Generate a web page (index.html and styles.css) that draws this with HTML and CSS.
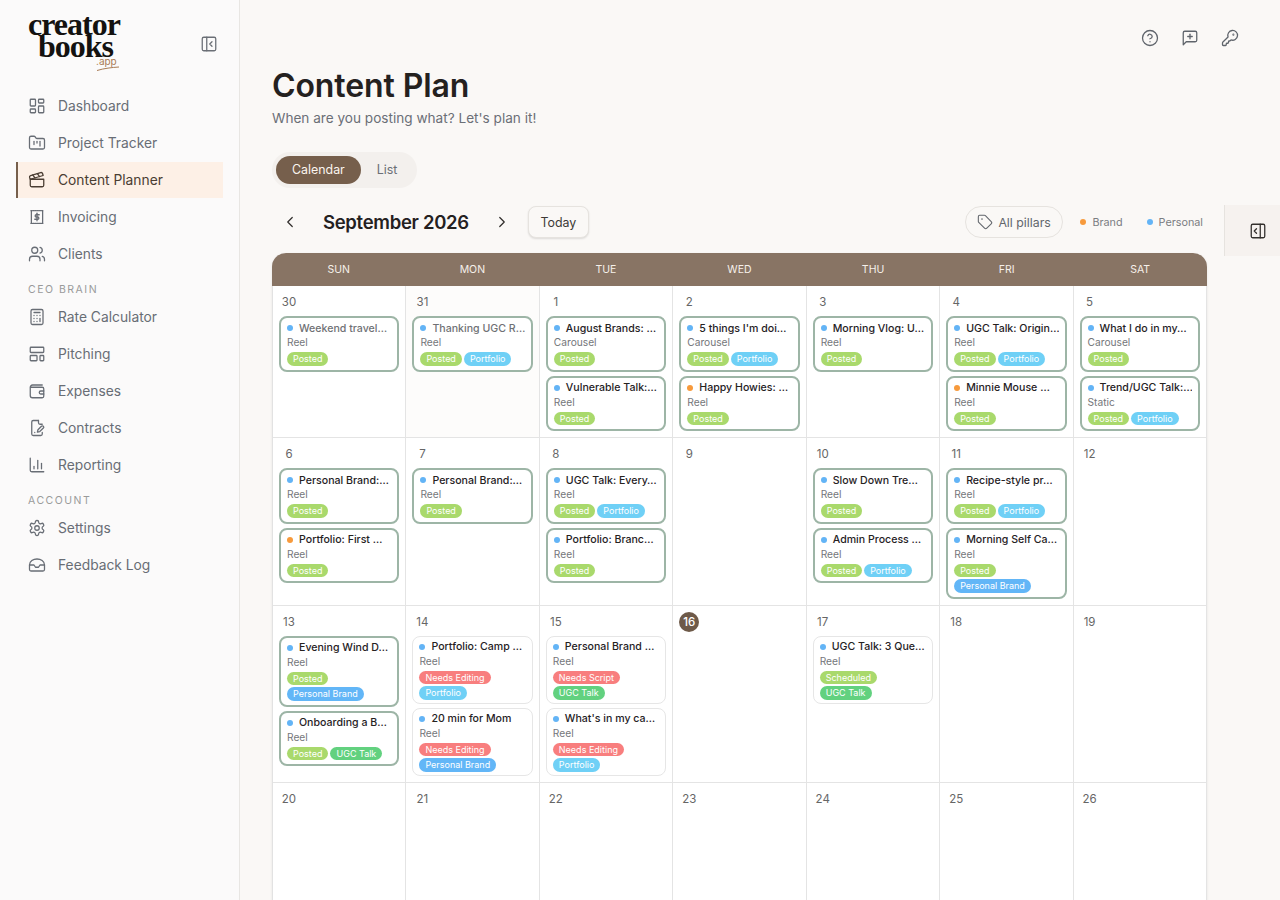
FILE: index.html
```html
<!DOCTYPE html>
<html lang="en">
<head>
  <meta charset="UTF-8">
  <title>Content Plan</title>
  <link rel="stylesheet" href="styles.css">
</head>
<body>
  <svg class="sprite" width="0" height="0">
    <symbol id="i-dashboard" viewBox="0 0 24 24"><rect x="3" y="3" width="7" height="9" rx="1"/><rect x="14" y="3" width="7" height="5" rx="1"/><rect x="14" y="12" width="7" height="9" rx="1"/><rect x="3" y="16" width="7" height="5" rx="1"/></symbol>
    <symbol id="i-folder" viewBox="0 0 24 24"><path d="M4 20h16a2 2 0 0 0 2-2V8a2 2 0 0 0-2-2h-7.93a2 2 0 0 1-1.66-.9l-.82-1.2A2 2 0 0 0 7.93 3H4a2 2 0 0 0-2 2v13c0 1.1.9 2 2 2Z"/><path d="M8 10v4"/><path d="M12 10v2"/><path d="M16 10v6"/></symbol>
    <symbol id="i-clapper" viewBox="0 0 24 24"><path d="M20.2 6 3 11l-.9-2.4c-.3-1.1.3-2.2 1.3-2.5l13.5-4c1.1-.3 2.2.3 2.5 1.3Z"/><path d="m6.2 5.3 3.1 3.9"/><path d="m12.4 3.4 3.1 4"/><path d="M3 11h18v8a2 2 0 0 1-2 2H5a2 2 0 0 1-2-2Z"/></symbol>
    <symbol id="i-invoice" viewBox="0 0 24 24"><path d="M4.5 3.5v17"/><path d="M19.5 3.5v17"/><path d="M4 3.5h16" stroke-dasharray="1.6 1.2"/><path d="M4 20.5h16" stroke-dasharray="1.6 1.2"/><path d="M12 7v10"/><path d="M15 9h-4a1.5 1.5 0 0 0 0 3h2a1.5 1.5 0 0 1 0 3H9"/></symbol>
    <symbol id="i-users" viewBox="0 0 24 24"><path d="M16 21v-2a4 4 0 0 0-4-4H6a4 4 0 0 0-4 4v2"/><circle cx="9" cy="7" r="4"/><path d="M22 21v-2a4 4 0 0 0-3-3.87"/><path d="M16 3.13a4 4 0 0 1 0 7.75"/></symbol>
    <symbol id="i-calc" viewBox="0 0 24 24"><rect x="4" y="2" width="16" height="20" rx="2"/><path d="M8 6h8"/><path d="M16 14v4"/><path d="M16 10h.01"/><path d="M12 10h.01"/><path d="M8 10h.01"/><path d="M12 14h.01"/><path d="M8 14h.01"/><path d="M12 18h.01"/><path d="M8 18h.01"/></symbol>
    <symbol id="i-template" viewBox="0 0 24 24"><rect x="3" y="3" width="18" height="7" rx="1"/><rect x="3" y="14" width="9" height="7" rx="1"/><rect x="16" y="14" width="5" height="7" rx="1"/></symbol>
    <symbol id="i-wallet" viewBox="0 0 24 24"><path d="M19 4H6a3 3 0 0 0-3 3v11a3 3 0 0 0 3 3h13a2 2 0 0 0 2-2V9a2 2 0 0 0-2-2H3"/><path d="M21 12h-4a2 2 0 0 0 0 4h4"/></symbol>
    <symbol id="i-contract" viewBox="0 0 24 24"><path d="M14 2H7a2 2 0 0 0-2 2v16a2 2 0 0 0 2 2h10a2 2 0 0 0 2-2v-2"/><path d="M14 2v3a2 2 0 0 0 2 2h3"/><path d="M20.5 9.6a1.8 1.8 0 0 0-2.6 0l-4.6 4.7-.8 3.2 3.2-.8 4.8-4.6a1.8 1.8 0 0 0 0-2.5z"/><path d="M9 18h.01"/></symbol>
    <symbol id="i-chart" viewBox="0 0 24 24"><path d="M3 3v16a2 2 0 0 0 2 2h16"/><path d="M8 17v-3"/><path d="M13 17V6"/><path d="M18 17V10"/></symbol>
    <symbol id="i-gear" viewBox="0 0 24 24"><path d="M12.22 2h-.44a2 2 0 0 0-2 2v.18a2 2 0 0 1-1 1.73l-.43.25a2 2 0 0 1-2 0l-.15-.08a2 2 0 0 0-2.73.73l-.22.38a2 2 0 0 0 .73 2.73l.15.1a2 2 0 0 1 1 1.72v.51a2 2 0 0 1-1 1.74l-.15.09a2 2 0 0 0-.73 2.73l.22.38a2 2 0 0 0 2.73.73l.15-.08a2 2 0 0 1 2 0l.43.25a2 2 0 0 1 1 1.73V20a2 2 0 0 0 2 2h.44a2 2 0 0 0 2-2v-.18a2 2 0 0 1 1-1.73l.43-.25a2 2 0 0 1 2 0l.15.08a2 2 0 0 0 2.73-.73l.22-.39a2 2 0 0 0-.73-2.73l-.15-.08a2 2 0 0 1-1-1.74v-.5a2 2 0 0 1 1-1.74l.15-.09a2 2 0 0 0 .73-2.73l-.22-.38a2 2 0 0 0-2.73-.73l-.15.08a2 2 0 0 1-2 0l-.43-.25a2 2 0 0 1-1-1.73V4a2 2 0 0 0-2-2z"/><circle cx="12" cy="12" r="3"/></symbol>
    <symbol id="i-inbox" viewBox="0 0 24 24"><path d="M2 12h6l2 3h4l2-3h6"/><path d="M2 12c0-5 5-8 10-8s10 3 10 8v6a2 2 0 0 1-2 2H4a2 2 0 0 1-2-2z"/></symbol>
    <symbol id="i-help" viewBox="0 0 24 24"><circle cx="12" cy="12" r="10"/><path d="M9.09 9a3 3 0 0 1 5.83 1c0 2-3 3-3 3"/><path d="M12 17h.01"/></symbol>
    <symbol id="i-msg" viewBox="0 0 24 24"><path d="M21 15a2 2 0 0 1-2 2H7l-4 4V5a2 2 0 0 1 2-2h14a2 2 0 0 1 2 2z"/><path d="M12 7v6"/><path d="M9 10h6"/></symbol>
    <symbol id="i-key" viewBox="0 0 24 24"><path d="M2.586 17.414A2 2 0 0 0 2 18.828V21a1 1 0 0 0 1 1h3a1 1 0 0 0 1-1v-1a1 1 0 0 1 1-1h1a1 1 0 0 0 1-1v-1a1 1 0 0 1 1-1h.172a2 2 0 0 0 1.414-.586l.814-.814a6.5 6.5 0 1 0-4-4z"/><circle cx="16.5" cy="7.5" r=".5"/></symbol>
    <symbol id="i-panel-left" viewBox="0 0 24 24"><rect x="3" y="3" width="18" height="18" rx="2"/><path d="M9 3v18"/><path d="m16 15-3-3 3-3"/></symbol>
    <symbol id="i-panel-right" viewBox="0 0 24 24"><rect x="3" y="3" width="18" height="18" rx="2"/><path d="M15 3v18"/><path d="m10 15-3-3 3-3"/></symbol>
    <symbol id="i-tag" viewBox="0 0 24 24"><path d="M12.586 2.586A2 2 0 0 0 11.172 2H4a2 2 0 0 0-2 2v7.172a2 2 0 0 0 .586 1.414l8.704 8.704a2.426 2.426 0 0 0 3.42 0l6.58-6.58a2.426 2.426 0 0 0 0-3.42z"/><circle cx="7.5" cy="7.5" r=".5"/></symbol>
    <symbol id="i-prev" viewBox="0 0 24 24"><path d="m15 18-6-6 6-6"/></symbol>
    <symbol id="i-next" viewBox="0 0 24 24"><path d="m9 18 6-6-6-6"/></symbol>
  </svg>

  <div class="app">
    <!-- Sidebar -->
    <aside class="sidebar">
      <div class="brand">
        <div class="logo">
          <div class="logo-line">creator</div>
          <div class="logo-line logo-line2">books</div>
          <div class="logo-app">.app</div>
          <svg class="logo-swoosh" viewBox="0 0 24 5"><path d="M1 4.5C8 2.4 16 1.4 23 1"/></svg>
        </div>
        <svg class="icon collapse-btn"><use href="#i-panel-left"/></svg>
      </div>

      <nav class="nav">
        <a class="nav-item"><svg class="icon"><use href="#i-dashboard"/></svg>Dashboard</a>
        <a class="nav-item"><svg class="icon"><use href="#i-folder"/></svg>Project Tracker</a>
        <a class="nav-item active"><svg class="icon"><use href="#i-clapper"/></svg>Content Planner</a>
        <a class="nav-item"><svg class="icon"><use href="#i-invoice"/></svg>Invoicing</a>
        <a class="nav-item"><svg class="icon"><use href="#i-users"/></svg>Clients</a>
        <div class="nav-label">CEO BRAIN</div>
        <a class="nav-item"><svg class="icon"><use href="#i-calc"/></svg>Rate Calculator</a>
        <a class="nav-item"><svg class="icon"><use href="#i-template"/></svg>Pitching</a>
        <a class="nav-item"><svg class="icon"><use href="#i-wallet"/></svg>Expenses</a>
        <a class="nav-item"><svg class="icon"><use href="#i-contract"/></svg>Contracts</a>
        <a class="nav-item"><svg class="icon"><use href="#i-chart"/></svg>Reporting</a>
        <div class="nav-label">ACCOUNT</div>
        <a class="nav-item"><svg class="icon"><use href="#i-gear"/></svg>Settings</a>
        <a class="nav-item"><svg class="icon"><use href="#i-inbox"/></svg>Feedback Log</a>
      </nav>
    </aside>

    <!-- Main -->
    <main class="main">
      <div class="topbar">
        <svg class="icon"><use href="#i-help"/></svg>
        <svg class="icon"><use href="#i-msg"/></svg>
        <svg class="icon"><use href="#i-key"/></svg>
      </div>

      <h1 class="page-title">Content Plan</h1>
      <p class="page-sub">When are you posting what? Let's plan it!</p>

      <div class="toggle">
        <span class="toggle-btn on">Calendar</span>
        <span class="toggle-btn">List</span>
      </div>

      <div class="month-bar">
        <svg class="icon month-prev"><use href="#i-prev"/></svg>
        <h2 class="month-name">September 2026</h2>
        <svg class="icon month-next"><use href="#i-next"/></svg>
        <button class="today-btn">Today</button>
        <div class="legend">
          <span class="pillars"><svg class="icon"><use href="#i-tag"/></svg>All pillars</span>
          <span class="legend-item"><i class="dot orange"></i>Brand</span>
          <span class="legend-item"><i class="dot blue"></i>Personal</span>
        </div>
      </div>

      <div class="calendar">
        <div class="cal-head">
          <div>SUN</div><div>MON</div><div>TUE</div><div>WED</div><div>THU</div><div>FRI</div><div>SAT</div>
        </div>
        <div class="cal-grid">
          <!-- week 1 -->
          <div class="day other">
            <div class="day-num">30</div>
            <div class="card done"><div class="card-title muted"><i class="dot blue"></i><span>Weekend travel…</span></div><div class="card-type">Reel</div><div class="tags"><span class="tag green">Posted</span></div></div>
          </div>
          <div class="day other tint">
            <div class="day-num">31</div>
            <div class="card done"><div class="card-title muted"><i class="dot blue"></i><span>Thanking UGC R…</span></div><div class="card-type">Reel</div><div class="tags"><span class="tag green">Posted</span><span class="tag sky">Portfolio</span></div></div>
          </div>
          <div class="day">
            <div class="day-num">1</div>
            <div class="card done"><div class="card-title"><i class="dot blue"></i><span>August Brands: …</span></div><div class="card-type">Carousel</div><div class="tags"><span class="tag green">Posted</span></div></div>
            <div class="card done"><div class="card-title"><i class="dot blue"></i><span>Vulnerable Talk:…</span></div><div class="card-type">Reel</div><div class="tags"><span class="tag green">Posted</span></div></div>
          </div>
          <div class="day">
            <div class="day-num">2</div>
            <div class="card done"><div class="card-title"><i class="dot blue"></i><span>5 things I'm doi…</span></div><div class="card-type">Carousel</div><div class="tags"><span class="tag green">Posted</span><span class="tag sky">Portfolio</span></div></div>
            <div class="card done"><div class="card-title"><i class="dot orange"></i><span>Happy Howies: …</span></div><div class="card-type">Reel</div><div class="tags"><span class="tag green">Posted</span></div></div>
          </div>
          <div class="day">
            <div class="day-num">3</div>
            <div class="card done"><div class="card-title"><i class="dot blue"></i><span>Morning Vlog: U…</span></div><div class="card-type">Reel</div><div class="tags"><span class="tag green">Posted</span></div></div>
          </div>
          <div class="day">
            <div class="day-num">4</div>
            <div class="card done"><div class="card-title"><i class="dot blue"></i><span>UGC Talk: Origin…</span></div><div class="card-type">Reel</div><div class="tags"><span class="tag green">Posted</span><span class="tag sky">Portfolio</span></div></div>
            <div class="card done"><div class="card-title"><i class="dot orange"></i><span>Minnie Mouse …</span></div><div class="card-type">Reel</div><div class="tags"><span class="tag green">Posted</span></div></div>
          </div>
          <div class="day">
            <div class="day-num">5</div>
            <div class="card done"><div class="card-title"><i class="dot blue"></i><span>What I do in my…</span></div><div class="card-type">Carousel</div><div class="tags"><span class="tag green">Posted</span></div></div>
            <div class="card done"><div class="card-title"><i class="dot blue"></i><span>Trend/UGC Talk:…</span></div><div class="card-type">Static</div><div class="tags"><span class="tag green">Posted</span><span class="tag sky">Portfolio</span></div></div>
          </div>

          <!-- week 2 -->
          <div class="day">
            <div class="day-num">6</div>
            <div class="card done"><div class="card-title"><i class="dot blue"></i><span>Personal Brand:…</span></div><div class="card-type">Reel</div><div class="tags"><span class="tag green">Posted</span></div></div>
            <div class="card done"><div class="card-title"><i class="dot orange"></i><span>Portfolio: First …</span></div><div class="card-type">Reel</div><div class="tags"><span class="tag green">Posted</span></div></div>
          </div>
          <div class="day">
            <div class="day-num">7</div>
            <div class="card done"><div class="card-title"><i class="dot blue"></i><span>Personal Brand:…</span></div><div class="card-type">Reel</div><div class="tags"><span class="tag green">Posted</span></div></div>
          </div>
          <div class="day">
            <div class="day-num">8</div>
            <div class="card done"><div class="card-title"><i class="dot blue"></i><span>UGC Talk: Every…</span></div><div class="card-type">Reel</div><div class="tags"><span class="tag green">Posted</span><span class="tag sky">Portfolio</span></div></div>
            <div class="card done"><div class="card-title"><i class="dot blue"></i><span>Portfolio: Branc…</span></div><div class="card-type">Reel</div><div class="tags"><span class="tag green">Posted</span></div></div>
          </div>
          <div class="day">
            <div class="day-num">9</div>
          </div>
          <div class="day">
            <div class="day-num">10</div>
            <div class="card done"><div class="card-title"><i class="dot blue"></i><span>Slow Down Tre…</span></div><div class="card-type">Reel</div><div class="tags"><span class="tag green">Posted</span></div></div>
            <div class="card done"><div class="card-title"><i class="dot blue"></i><span>Admin Process …</span></div><div class="card-type">Reel</div><div class="tags"><span class="tag green">Posted</span><span class="tag sky">Portfolio</span></div></div>
          </div>
          <div class="day">
            <div class="day-num">11</div>
            <div class="card done"><div class="card-title"><i class="dot blue"></i><span>Recipe-style pr…</span></div><div class="card-type">Reel</div><div class="tags"><span class="tag green">Posted</span><span class="tag sky">Portfolio</span></div></div>
            <div class="card done"><div class="card-title"><i class="dot blue"></i><span>Morning Self Ca…</span></div><div class="card-type">Reel</div><div class="tags wrap"><span class="tag green">Posted</span><span class="tag azure">Personal Brand</span></div></div>
          </div>
          <div class="day">
            <div class="day-num">12</div>
          </div>

          <!-- week 3 -->
          <div class="day">
            <div class="day-num">13</div>
            <div class="card done"><div class="card-title"><i class="dot blue"></i><span>Evening Wind D…</span></div><div class="card-type">Reel</div><div class="tags wrap"><span class="tag green">Posted</span><span class="tag azure">Personal Brand</span></div></div>
            <div class="card done"><div class="card-title"><i class="dot blue"></i><span>Onboarding a B…</span></div><div class="card-type">Reel</div><div class="tags"><span class="tag green">Posted</span><span class="tag emerald">UGC Talk</span></div></div>
          </div>
          <div class="day">
            <div class="day-num">14</div>
            <div class="card"><div class="card-title"><i class="dot blue"></i><span>Portfolio: Camp …</span></div><div class="card-type">Reel</div><div class="tags wrap"><span class="tag red">Needs Editing</span><span class="tag sky">Portfolio</span></div></div>
            <div class="card"><div class="card-title"><i class="dot blue"></i><span>20 min for Mom</span></div><div class="card-type">Reel</div><div class="tags wrap"><span class="tag red">Needs Editing</span><span class="tag azure">Personal Brand</span></div></div>
          </div>
          <div class="day">
            <div class="day-num">15</div>
            <div class="card"><div class="card-title"><i class="dot blue"></i><span>Personal Brand …</span></div><div class="card-type">Reel</div><div class="tags wrap"><span class="tag red">Needs Script</span><span class="tag emerald">UGC Talk</span></div></div>
            <div class="card"><div class="card-title"><i class="dot blue"></i><span>What's in my ca…</span></div><div class="card-type">Reel</div><div class="tags wrap"><span class="tag red">Needs Editing</span><span class="tag sky">Portfolio</span></div></div>
          </div>
          <div class="day">
            <div class="day-num today">16</div>
          </div>
          <div class="day">
            <div class="day-num">17</div>
            <div class="card"><div class="card-title"><i class="dot blue"></i><span>UGC Talk: 3 Que…</span></div><div class="card-type">Reel</div><div class="tags wrap"><span class="tag green">Scheduled</span><span class="tag emerald">UGC Talk</span></div></div>
          </div>
          <div class="day">
            <div class="day-num">18</div>
          </div>
          <div class="day">
            <div class="day-num">19</div>
          </div>

          <!-- week 4 -->
          <div class="day tall"><div class="day-num">20</div></div>
          <div class="day tall"><div class="day-num">21</div></div>
          <div class="day tall"><div class="day-num">22</div></div>
          <div class="day tall"><div class="day-num">23</div></div>
          <div class="day tall"><div class="day-num">24</div></div>
          <div class="day tall"><div class="day-num">25</div></div>
          <div class="day tall"><div class="day-num">26</div></div>
        </div>
      </div>
    </main>

    <div class="panel-tab"><svg class="icon"><use href="#i-panel-right"/></svg></div>
  </div>
</body>
</html>
```

FILE: styles.css
```css
* { box-sizing: border-box; }
html, body { margin: 0; height: 100%; }
body { font-family: Inter, "Noto Sans", sans-serif; color: #26221f; background: #faf8f6; overflow: hidden; }
.sprite { position: absolute; }
.icon { width: 18px; height: 18px; fill: none; stroke: currentColor; stroke-width: 1.7; stroke-linecap: round; stroke-linejoin: round; flex: none; }

.app { display: flex; height: 900px; overflow: hidden; position: relative; }

/* sidebar */
.sidebar { width: 240px; flex: none; padding: 16px 16px 0; border-right: 1px solid #e8e6e3; background: #fbfafa; }
.brand { display: flex; align-items: center; justify-content: space-between; height: 56px; padding: 0 5px 0 12px; margin-bottom: 16px; }
.logo { position: relative; width: 100px; height: 56px; margin-top: -6px; }
.logo-line { font-family: "Liberation Serif", serif; font-weight: 700; font-size: 32px; line-height: 22px; letter-spacing: -1px; color: #141210; }
.logo-line2 { padding-left: 10px; }
.logo-app { position: absolute; left: 68px; top: 42px; font-size: 10px; line-height: 12px; color: #a87b55; }
.logo-swoosh { position: absolute; left: 68px; top: 53px; width: 24px; height: 5px; fill: none; stroke: #a87b55; stroke-width: 1; }
.collapse-btn { color: #6b6f76; }

.nav { display: flex; flex-direction: column; }
.nav-item { display: flex; align-items: center; gap: 12px; height: 36px; margin-bottom: 1px; padding-left: 12px; font-size: 13.8px; color: #686d75; }
.nav-item.active { background: #fdf0e6; border-left: 2px solid #765f4c; padding-left: 10px; color: #4a3d32; }
.nav-label { padding-left: 12px; margin-top: 9px; margin-bottom: 1px; height: 16px; font-size: 10.5px; line-height: 16px; letter-spacing: 1.5px; color: #9a9a9a; }

/* main */
.main { flex: 1; min-width: 0; padding: 18px 73px 0 32px; }
.topbar { display: flex; justify-content: flex-end; gap: 22px; height: 40px; margin-right: -32px; align-items: center; color: #5f646b; }
.page-title { margin: 8px 0 0; font-size: 32px; line-height: 40px; font-weight: 600; color: #24211f; letter-spacing: -0.1px; }
.page-sub { margin: 2px 0 0; font-size: 13.6px; line-height: 20px; color: #6b6f76; }

.toggle { display: inline-flex; align-items: center; margin-top: 24px; padding: 4px; height: 36px; border-radius: 18px; background: #f3f0ed; }
.toggle-btn { display: block; padding: 0 16px; height: 28px; line-height: 28px; border-radius: 14px; font-size: 12.4px; color: #6b6f76; }
.toggle-btn.on { background: #765f4c; color: #fbf5ef; }

.month-bar { display: flex; align-items: center; margin-top: 18px; height: 32px; padding-right: 4px; }
.month-prev { margin-left: 9px; color: #2f2c2a; stroke-width: 1.6; }
.month-next { margin-left: 24px; color: #2f2c2a; stroke-width: 1.6; }
.month-name { margin: 0 0 0 24px; font-size: 18.5px; font-weight: 600; color: #24211f; letter-spacing: -0.3px; }
.today-btn { margin-left: 17px; height: 32px; width: 61px; padding: 0; border: 1px solid #e6e3df; border-radius: 8px; background: #faf8f6; box-shadow: 0 1px 2px rgba(0,0,0,.12); font: inherit; font-size: 12.4px; color: #3d3a37; }
.legend { margin-left: auto; display: flex; align-items: center; font-size: 10.8px; color: #7a7d82; }
.pillars { display: flex; align-items: center; gap: 5px; height: 32px; width: 98px; padding-left: 11px; margin-right: 17px; border: 1px solid #e6e3df; border-radius: 16px; font-size: 12.3px; color: #62666c; }
.pillars .icon { width: 16px; height: 16px; stroke-width: 1.6; }
.legend-item { display: flex; align-items: center; gap: 6px; margin-right: 24px; }
.legend-item:last-child { margin-right: 0; }

.dot { display: block; width: 6px; height: 6px; border-radius: 50%; flex: none; }
.dot.blue { background: #63b4f6; }
.dot.orange { background: #f79a3c; }

/* calendar */
.calendar { margin-top: 15px; border-radius: 14px 14px 0 0; background: #fff; border-left: 1px solid #e2e2e2; box-shadow: 0 1px 3px rgba(0,0,0,.08); }
.cal-head { display: grid; grid-template-columns: repeat(7, minmax(0, 1fr)); height: 33px; margin-left: -1px; background: #887464; border-radius: 14px 14px 0 0; color: #f6f0ea; font-size: 10.5px; line-height: 33px; text-align: center; }
.cal-grid { display: grid; grid-template-columns: repeat(7, minmax(0, 1fr)); }
.day { padding: 6px; border-right: 1px solid #e4e4e4; border-bottom: 1px solid #e4e4e4; display: flex; flex-direction: column; gap: 4px; min-width: 0; }
.day.tint { background: #fdfcfb; }
.day.tall { height: 130px; }
.day-num { width: 20px; height: 20px; font-size: 11.5px; line-height: 20px; text-align: center; color: #666; }
.day-num.today { background: #6e5a49; color: #fff; border-radius: 50%; font-weight: 500; }

.card { padding: 2px 6px 3px; border: 1px solid #e6e6e6; border-radius: 8px; background: #fff; }
.card.done { border: 2px solid #9db5a6; padding-bottom: 4px; }
.card-title { display: flex; align-items: center; gap: 6px; height: 16px; font-size: 10.6px; font-weight: 500; color: #26221f; white-space: nowrap; overflow: hidden; }
.card-title.muted { color: #6f7175; }
.card-type { font-size: 10.2px; line-height: 13px; color: #74767a; }
.tags { display: flex; flex-wrap: wrap; gap: 2px; margin-top: 3px; }
.tags.wrap { flex-direction: column; align-items: flex-start; }
.tag { display: block; height: 13.5px; padding: 0 6px; border-radius: 7px; font-size: 9px; line-height: 13.5px; color: #fff; white-space: nowrap; }
.tag.green { background: #a9d96c; }
.tag.sky { background: #6fd0f6; }
.tag.azure { background: #62b6f7; }
.tag.emerald { background: #62d17f; }
.tag.red { background: #f87e7e; }

.panel-tab { position: absolute; top: 205px; right: 0; width: 56px; height: 51px; display: flex; align-items: center; justify-content: center; padding-left: 10px; background: #f6f2ef; border-left: 1px solid #e6e3df; color: #33302d; }
```
